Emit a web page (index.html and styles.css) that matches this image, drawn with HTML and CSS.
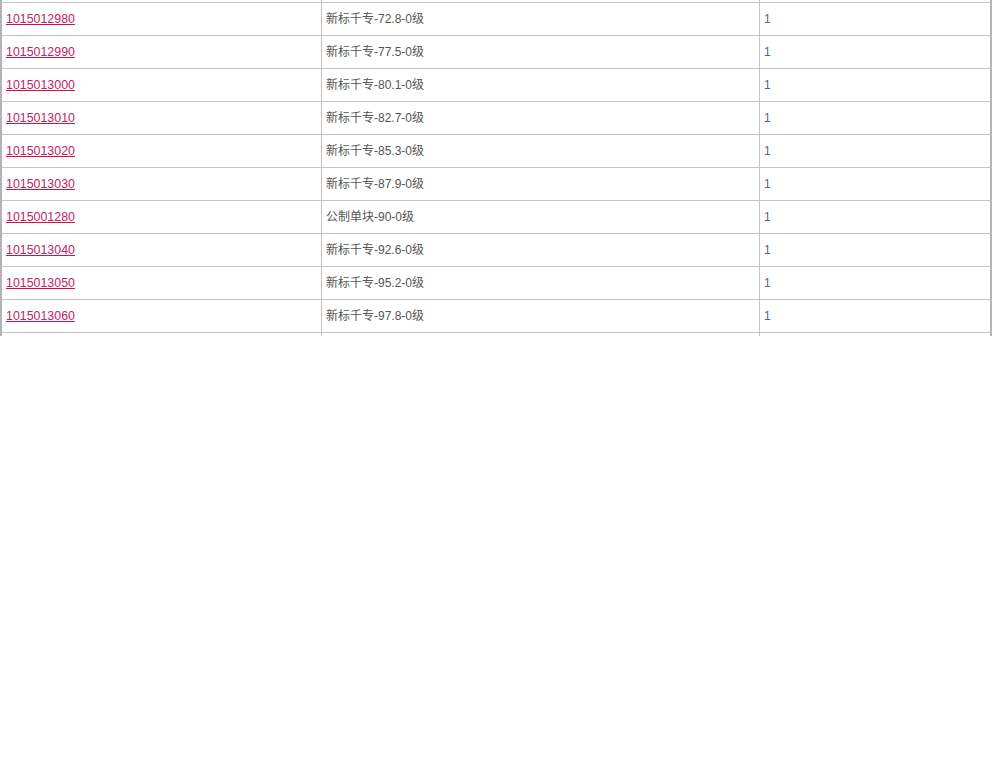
FILE: index.html
```html
<!DOCTYPE html>
<html>
<head>
<meta charset="utf-8">
<link rel="stylesheet" href="styles.css">
</head>
<body>
<div class="viewport">
  <div class="grid">
    <div class="cell"></div><div class="cell name"></div><div class="cell num last"></div>
    <div class="cell"><a href="#">1015012980</a></div><div class="cell name">新标千专-72.8-0级</div><div class="cell num last">1</div>
    <div class="cell"><a href="#">1015012990</a></div><div class="cell name">新标千专-77.5-0级</div><div class="cell num last">1</div>
    <div class="cell"><a href="#">1015013000</a></div><div class="cell name">新标千专-80.1-0级</div><div class="cell num last">1</div>
    <div class="cell"><a href="#">1015013010</a></div><div class="cell name">新标千专-82.7-0级</div><div class="cell num last">1</div>
    <div class="cell"><a href="#">1015013020</a></div><div class="cell name">新标千专-85.3-0级</div><div class="cell num last">1</div>
    <div class="cell"><a href="#">1015013030</a></div><div class="cell name">新标千专-87.9-0级</div><div class="cell num last">1</div>
    <div class="cell"><a href="#">1015001280</a></div><div class="cell name">公制单块-90-0级</div><div class="cell num last">1</div>
    <div class="cell"><a href="#">1015013040</a></div><div class="cell name">新标千专-92.6-0级</div><div class="cell num last">1</div>
    <div class="cell"><a href="#">1015013050</a></div><div class="cell name">新标千专-95.2-0级</div><div class="cell num last">1</div>
    <div class="cell"><a href="#">1015013060</a></div><div class="cell name">新标千专-97.8-0级</div><div class="cell num last">1</div>
    <div class="cell"></div><div class="cell name"></div><div class="cell num last"></div>
  </div>
</div>
</body>
</html>
```

FILE: styles.css
```css
html, body {
  margin: 0;
  padding: 0;
  background: #fff;
}
.viewport {
  width: 992px;
  height: 336px;
  overflow: hidden;
}
.grid {
  margin-top: -30px;
  display: grid;
  grid-template-columns: 320px 438px 232px;
  border-left: 2px solid #b4b4b4;
  font-family: "Liberation Sans", Arial, "Noto Sans CJK SC", sans-serif;
  font-size: 12px;
}
.cell {
  box-sizing: border-box;
  height: 33px;
  border-bottom: 1px solid #c4c4c4;
  border-right: 1px solid #c4c4c4;
  padding: 9px 4px 0;
  line-height: 14px;
  color: #555;
  white-space: nowrap;
}
.cell.last {
  border-right: 2px solid #b4b4b4;
}
.cell a {
  font-size: 12.4px;
  color: #c42064;
  text-decoration: underline;
  text-decoration-color: #d4103c;
}
.name {
  color: #555;
}
.num {
  color: #60589c;
}
```
